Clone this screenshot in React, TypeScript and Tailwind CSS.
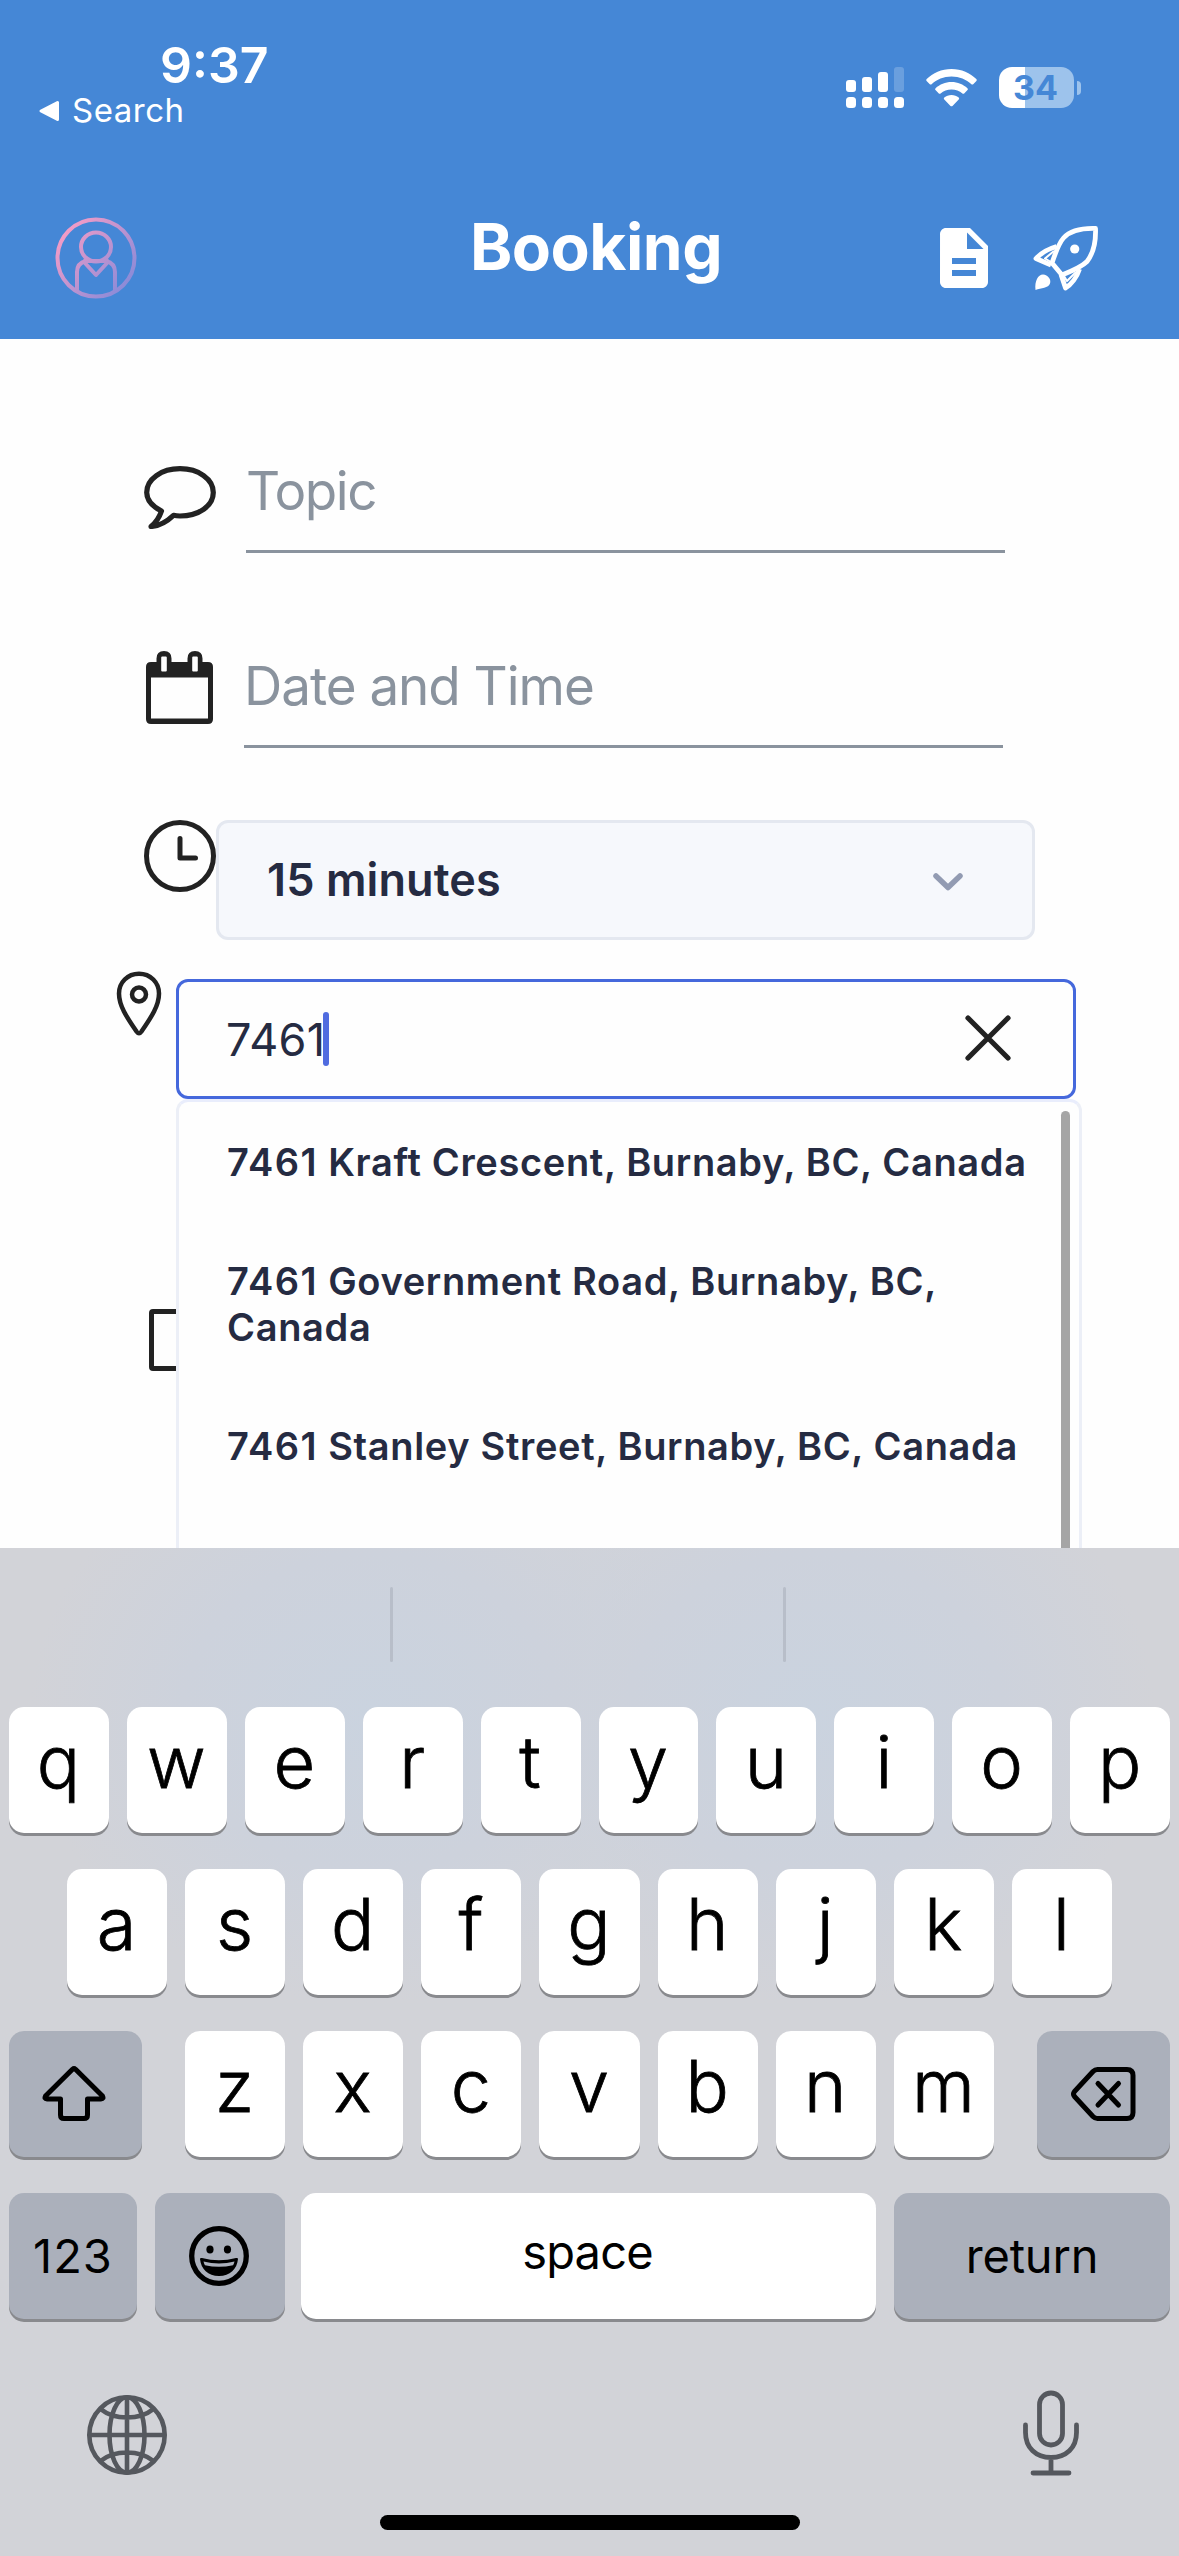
import type { ReactNode } from 'react';

function StatusBar() {
  return (
    <div className="flex h-[217px] items-start justify-between pr-[98px]">
      <div className="pt-10">
        <div className="ml-[160px] text-[50px] leading-[50px] font-semibold">9:37</div>
        <div className="ml-[38px] flex items-center">
          <svg className="mt-px h-[22px] w-[22px]" viewBox="0 0 22 22">
            <path d="M3 11 19.500 2.500v17Z" fill="#fff" stroke="#fff" strokeWidth="3" strokeLinejoin="round" />
          </svg>
          <span className="ml-3 text-[33px] leading-10 tracking-[0.5px]">Search</span>
        </div>
      </div>
      <div className="flex pt-[67px]">
        <svg className="h-[41px] w-[58px]" viewBox="0 0 58 41" fill="#fff">
          <rect x="0" y="13" width="10" height="12" rx="3" />
          <rect x="16" y="10" width="10" height="15" rx="3" />
          <rect x="32" y="5" width="10" height="20" rx="3" />
          <rect x="48" y="0" width="10" height="25" rx="3" opacity="0.2" />
          <rect x="0" y="30" width="10" height="11" rx="3.5" />
          <rect x="16" y="30" width="10" height="11" rx="3.5" />
          <rect x="32" y="30" width="10" height="11" rx="3.5" />
          <rect x="48" y="30" width="10" height="11" rx="3.5" />
        </svg>
        <svg className="ml-[22px] h-[41px] w-[51px]" viewBox="0 0 51 41" fill="#fff">
          <path d="M25.5 2C35.4 2 44.2 5.9 50.3 12.1c.6.6.6 1.3.1 1.9l-3.2 3.2c-.5.5-1.3.5-1.8 0C40.300 12.500 33.300 9.600 25.500 9.600S10.700 12.500 5.600 17.200c-.5.5-1.300.5-1.800 0L.6 14c-.5-.6-.5-1.300.1-1.900C6.800 5.900 15.600 2 25.500 2Z" />
          <path d="M25.500 15c6.200 0 11.800 2.400 15.900 6.200.6.6.6 1.300.1 1.900l-3.300 3.300c-.5.5-1.200.5-1.800.1-2.900-2.500-6.700-4-10.900-4s-8 1.500-10.900 4c-.6.4-1.300.4-1.800-.1l-3.300-3.300c-.5-.6-.5-1.300.1-1.900C13.700 17.400 19.300 15 25.500 15Z" />
          <path d="M25.500 28c2.800 0 5.300 1 7.200 2.600.6.5.6 1.300 0 1.900l-6.200 6.400c-.6.6-1.400.6-2 0l-6.200-6.400c-.6-.6-.6-1.400 0-1.900C20.200 29 22.700 28 25.500 28Z" />
        </svg>
        <div className="ml-[22px] flex h-[41px] w-[75px] items-center justify-center rounded-[13px] bg-linear-to-r from-white from-[35%] to-[#9dc3ec] to-[35%] pr-[2px] text-[34px] leading-none font-bold text-[#4587d6]">
          34
        </div>
        <div className="mt-[14px] ml-[3px] h-[14px] w-[4px] rounded-r-full bg-[#9dc3ec]" />
      </div>
    </div>
  );
}

function Header() {
  return (
    <header className="h-[339px] bg-[#4587d6] text-white">
      <StatusBar />
      <div className="flex items-start">
        <svg className="ml-[55px] h-[82px] w-[82px]" viewBox="0 0 82 82" fill="none" stroke="url(#avatar)" strokeWidth="4" strokeLinejoin="round">
          <defs>
            <linearGradient id="avatar" gradientUnits="userSpaceOnUse" x1="8" y1="14" x2="72" y2="68">
              <stop offset="0" stopColor="#f59cc6" />
              <stop offset="1" stopColor="#8b8bd8" />
            </linearGradient>
          </defs>
          <circle cx="41" cy="41" r="38.500" />
          <ellipse cx="41" cy="30" rx="15" ry="14.500" />
          <path d="M22 73V55C22 49 25 45.500 31 44H51C57 45.500 60 49 60 55V73M31 42 29 45 41 58 53 45 51 42" />
        </svg>
        <h1 className="ml-[333px] w-[260px] text-[64px] leading-[59px] font-bold tracking-[-0.5px]">Booking</h1>
        <svg className="mt-[5px] ml-[198px] h-[72px] w-[72px]" viewBox="0 0 24 24" fill="#fff">
          <path d="M14 2H6c-1.100 0-1.990.9-1.990 2L4 20c0 1.100.89 2 1.990 2H18c1.100 0 2-.9 2-2V8l-6-6zm2 16H8v-2h8v2zm0-4H8v-2h8v2zm-3-5V3.500L18.500 9H13z" />
        </svg>
        <svg className="mt-[7px] ml-8 h-[68px] w-[68px]" viewBox="0 0 68 68" fill="none" stroke="#fff" strokeWidth="4.800" strokeLinejoin="round">
          <path d="M63.500 4.500C48 4 37 8 31.500 14 27 19 23 30 20 39L30 51C40 47 50 42.500 55 37.500 61.500 29 64 18 63.500 4.500Z" />
          <path d="M24.500 22.500C16 25 9 29 4 34.500L19 41" />
          <path d="M47.500 45C45 53 39 60.500 33.500 64L29 50.500" />
          <path d="M22 27 13 34.500 19 38M44 48 35 57 31 50.500" strokeWidth="2" />
          <circle cx="42.700" cy="25" r="4.600" fill="#fff" stroke="none" />
          <path d="M3.500 66C2.500 57 6 50.500 11 50.500 16 50.500 19.500 56 18 59.500 16.500 64 9 64 3.500 66Z" fill="#fff" stroke="none" />
        </svg>
      </div>
    </header>
  );
}

const suggestions = [
  { number: '7461', place: 'Kraft Crescent, Burnaby, BC, Canada' },
  { number: '7461', place: 'Government Road, Burnaby, BC, Canada' },
  { number: '7461', place: 'Stanley Street, Burnaby, BC, Canada' },
];

function Form() {
  return (
    <main className="h-[1209px] overflow-hidden bg-[#fefefe] pt-[121px] pl-[144px]">
      <div className="flex h-[93px]">
        <svg className="mt-[5px] h-16 w-[72px]" viewBox="0 0 72 64" fill="none" stroke="#222" strokeWidth="5.200" strokeLinejoin="round">
          <path d="M17.500 46C8.500 41.500 2.700 35 2.700 27.500 2.700 14 17.500 3.700 36 3.700S69.300 14 69.300 27.500 54.500 51 36 51Q32.500 51 29.500 50.300C23 56.500 14.500 61 7 61.500 12.500 57 15.500 52 17.500 46Z" />
        </svg>
        <div className="ml-[30px] w-[759px] border-b-[3px] border-[#8a939e] pt-px text-[53px] leading-[60px] tracking-[-1.5px] text-[#8a939e]">Topic</div>
      </div>

      <div className="mt-[97px] flex h-[98px]">
        <svg className="h-[74px] w-[72px]" viewBox="0 0 72 74">
          <path d="M7 12H64Q69 12 69 17V69Q69 74 64 74H7Q2 74 2 69V17Q2 12 7 12Z" fill="#222" />
          <path d="M7 27.500H64V68.500H7Z" fill="#fefefe" />
          <rect x="14.500" y="3" width="10.500" height="20" rx="5" fill="#fefefe" />
          <rect x="45.500" y="3" width="10.500" height="20" rx="5" fill="#fefefe" />
          <path d="M12.500 25V8.500Q12.500 1 20 1T27.500 8.500V25ZM43.500 25V8.500Q43.500 1 51 1T58.500 8.500V25Z" fill="#222" />
          <path d="M17.200 20.500V7.500Q17.200 6.500 18.200 6.500H21.800Q22.800 6.500 22.800 7.500V20.500Q22.800 21.500 21.800 21.500H18.200Q17.200 21.500 17.200 20.500ZM48.200 20.500V7.500Q48.200 6.500 49.200 6.500H52.800Q53.800 6.500 53.800 7.500V20.500Q53.800 21.500 52.800 21.500H49.200Q48.200 21.500 48.200 20.500Z" fill="#fefefe" />
        </svg>
        <div className="ml-[28px] w-[759px] border-b-[3px] border-[#8a939e] pt-[6px] text-[53px] leading-[60px] tracking-[-1.05px] text-[#8a939e]">Date and Time</div>
      </div>

      <div className="mt-[72px] flex h-[120px]">
        <svg className="h-[72px] w-[72px]" viewBox="0 0 72 72" fill="none" stroke="#222" strokeWidth="5" strokeLinecap="round" strokeLinejoin="round">
          <circle cx="36" cy="36" r="33.500" />
          <path d="M36 18.500V38H51.500" />
        </svg>
        <div className="flex w-[819px] items-center justify-between rounded-[12px] border-[3px] border-[#e4e8f0] bg-[#f6f8fc] pr-[68px] pl-[48px]">
          <span className="mb-[2px] text-[45px] leading-none font-semibold tracking-[0.1px] text-[#252b42]">15 minutes</span>
          <svg className="mt-1 h-5 w-[32px]" viewBox="0 0 32 20" fill="none" stroke="#929bb2" strokeWidth="5.500" strokeLinecap="round" strokeLinejoin="round">
            <path d="M4 4 16 15.500 28 4" />
          </svg>
        </div>
      </div>

      <div className="mt-[31px] -ml-7 flex h-[128px] items-start">
        <svg className="h-[65px] w-[46px]" viewBox="0 0 46 65" fill="none" stroke="#222" strokeWidth="4.500" strokeLinejoin="round">
          <path d="M23 2.700C11.500 2.700 3 11.500 3 22.500 3 35 11 46.500 20.500 60.500Q23 64 25.500 60.500C35 46.500 43 35 43 22.500 43 11.500 34.500 2.700 23 2.700Z" />
          <circle cx="23" cy="23.500" r="7" />
        </svg>
        <div className="relative mt-2 ml-[14px] h-[120px] w-[900px]">
          <div className="flex h-full items-center rounded-[12px] border-[3px] border-[#4568dc] bg-[#fefefe] pr-[61px] pl-[47px]">
            <span className="text-[45px] leading-none tracking-[0.3px] text-[#252b42]">7461</span>
            <span className="-ml-[2px] h-[54px] w-[6px] rounded-full bg-[#506ce0]" />
            <svg className="mr-0 ml-auto h-[48px] w-[48px]" viewBox="0 0 48 48" fill="none" stroke="#222" strokeWidth="5.200" strokeLinecap="round">
              <path d="M4 3 44 43M44 3 4 43" />
            </svg>
          </div>
          <div className="absolute top-full left-0 flex h-[600px] w-[906px] rounded-[12px] border-[3px] border-[#eceff7] border-t-[#e9edfc] bg-[#fefefe]">
            <ul className="w-[882px] pr-[22px] pl-12">
              {suggestions.map(({ number, place }) => (
                <li key={place} className="py-[36.500px] text-[38px] leading-[46px] font-semibold tracking-[0.66px] text-[#252b42]">
                  <span className="tracking-[1.400px]">{number}</span> {place}
                </li>
              ))}
            </ul>
            <div className="mt-[9px] h-[500px] w-[9px] rounded-full bg-[#a5a5a5]" />
          </div>
        </div>
      </div>

      <div className="mt-[210px] ml-[5px] h-[62px] w-[62px] rounded-[4px] border-5 border-[#222]" />
    </main>
  );
}

function Key({ className = '', dark = false, children }: { className?: string; dark?: boolean; children: ReactNode }) {
  return (
    <div className={`flex h-[126px] justify-center rounded-[15px] shadow-[0_3px_0_#898a8e] ${dark ? 'bg-[#abb0bb]' : 'bg-white'} ${className}`}>
      {children}
    </div>
  );
}

function Letters({ letters }: { letters: string }) {
  return (
    <>
      {letters.split('').map((l) => (
        <Key key={l} className="flex-1 pr-px text-[72px] leading-[110px] font-light [-webkit-text-stroke:0.8px_#000]">{l}</Key>
      ))}
    </>
  );
}

function Keyboard() {
  return (
    <section className="flex h-[1008px] flex-col bg-[#d2d3d8] bg-[radial-gradient(ellipse_340px_290px_at_370px_165px,#cad3df_0%,#cdd2dc_55%,transparent_100%),radial-gradient(ellipse_340px_290px_at_815px_165px,#cad3df_0%,#cdd2dc_55%,transparent_100%)] px-[9px] text-black">
      <div className="flex h-[159px] pt-[39px]">
        <div className="ml-[381px] h-[75px] w-[3px] rounded-full bg-[#b8bec9]" />
        <div className="ml-[390px] h-[75px] w-[3px] rounded-full bg-[#b8bec9]" />
      </div>
      <div className="flex gap-[18px]"><Letters letters="qwertyuiop" /></div>
      <div className="mt-9 flex gap-[18px] px-[58px]"><Letters letters="asdfghjkl" /></div>
      <div className="mt-9 flex">
        <Key dark className="w-[133px] items-center pr-[3px]">
          <svg className="h-[58px] w-[66px]" viewBox="0 0 66 58" fill="none" stroke="#000" strokeWidth="5" strokeLinejoin="round">
            <path d="M31.500 4.300Q33 3 34.500 4.300L61.500 31Q63 34 60 34H46.500V50Q46.500 53.500 43 53.500H23Q19.500 53.500 19.500 50V34H6Q3 34 4.500 31Z" />
          </svg>
        </Key>
        <div className="mx-[43px] flex w-[809px] gap-[18px]"><Letters letters="zxcvbnm" /></div>
        <Key dark className="w-[133px] items-center pr-[2px]">
          <svg className="h-[56px] w-[66px]" viewBox="0 0 66 56" fill="none" stroke="#000" strokeWidth="5" strokeLinecap="round" strokeLinejoin="round">
            <path d="M27.500 3.500H57Q63 3.500 63 9.500V46.500Q63 52.500 57 52.500H27.500Q25 52.500 23 50.500L4.500 30.500Q2.500 28 4.500 25.500L23 5.500Q25 3.500 27.500 3.500Z" />
            <path d="M28 17.500 48.500 39M48.500 17.500 28 39" />
          </svg>
        </Key>
      </div>
      <div className="mt-9 flex text-[47px]">
        <Key dark className="w-[128px] leading-[126px] tracking-[1px]">123</Key>
        <Key dark className="ml-[18px] w-[130px] items-center">
          <svg className="mr-[2px] h-[60px] w-[60px]" viewBox="0 0 60 60">
            <circle cx="30" cy="30" r="27.300" fill="none" stroke="#000" strokeWidth="5.300" />
            <ellipse cx="21" cy="23.500" rx="3.600" ry="4" />
            <ellipse cx="38.500" cy="23.500" rx="3.600" ry="4" />
            <path d="M11 33Q11 31.500 13 32 30 36.500 47 32 49 31.500 49 33C48 43 41 50 30 50S12 43 11 33Z" />
            <path d="M14.500 35.600Q30 39.300 45.500 35.600 45 37.800 44 39.300 30 42.300 16 39.300 15 37.800 14.500 35.600Z" fill="#abb0bb" />
          </svg>
        </Key>
        <Key className="ml-4 w-[575px] pr-[2px] leading-[118px] tracking-[-0.8px]">space</Key>
        <Key dark className="ml-[18px] w-[276px] leading-[126px] tracking-[-0.2px]">return</Key>
      </div>
      <div className="mt-[70px] flex justify-between pr-[91px] pl-[77px]">
        <svg className="mt-[5px] h-[82px] w-[82px]" viewBox="0 0 82 82" fill="none" stroke="#55585e" strokeWidth="4.600">
          <circle cx="41" cy="41" r="37.700" />
          <ellipse cx="41" cy="41" rx="17.500" ry="37.700" />
          <path d="M41 3V79M3 41H79M14.500 15Q25 23.500 41 23.500T67.500 15M14.500 67Q25 58.500 41 58.500T67.500 67" />
        </svg>
        <svg className="h-[87px] w-[56px]" viewBox="0 0 56 87" fill="none" stroke="#55585e" strokeWidth="4.800" strokeLinecap="round">
          <rect x="16.500" y="4" width="23" height="52" rx="11.500" />
          <path d="M2.500 36V43.500C2.500 59 13 68.500 28 68.500S53.500 59 53.500 43.500V36M28 68.500V83M10 84H46" />
        </svg>
      </div>
      <div className="mx-auto mt-[39px] h-[15px] w-[420px] rounded-full bg-black" />
    </section>
  );
}

export default function App() {
  return (
    <div className="h-[2556px] w-[1179px] overflow-hidden font-[Inter,sans-serif]">
      <Header />
      <Form />
      <Keyboard />
    </div>
  );
}
